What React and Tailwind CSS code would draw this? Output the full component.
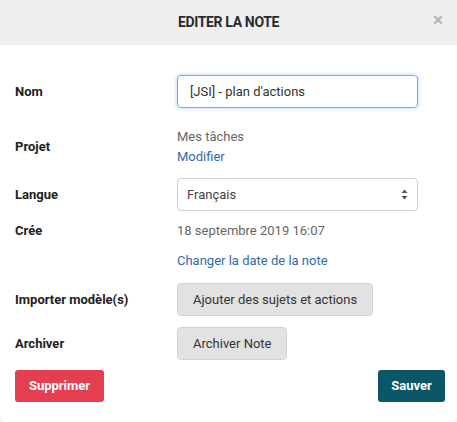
const FONT = { fontFamily: 'Roboto, "Liberation Sans", sans-serif' }

function Row({ label, children, className = '' }) {
  return (
    <div className={`flex items-center ${className}`}>
      <div className="w-[162px] text-[13px] font-bold text-[#222]">{label}</div>
      <div className="flex-1">{children}</div>
    </div>
  )
}

export default function App() {
  return (
    <div className="w-[457px] h-[422px] bg-[#f3f3f3]" style={FONT}>
      <div className="w-[457px] h-[422px] bg-white rounded-b-md overflow-hidden">
        {/* En-tête */}
        <div className="h-[45px] bg-[#efefef] flex items-center justify-center relative">
          <h1 className="text-[14px] font-bold text-[#2a2a2a] tracking-tight">EDITER LA NOTE</h1>
          <span className="absolute right-[14px] top-[10px] text-[#b5b5b5] text-[19px] font-bold leading-none">×</span>
        </div>

        {/* Formulaire */}
        <div className="pl-[15px] pr-[12px] pt-[30px]">
          <Row label="Nom">
            <input
              defaultValue="[JSI] - plan d'actions"
              className="w-[241px] h-[33px] px-[12px] rounded-[4px] border border-[#72aee6] shadow-[0_0_4px_rgba(80,150,230,0.45)] text-[13px] text-[#333] outline-none"
              style={FONT}
            />
          </Row>

          <Row label="Projet" className="mt-[19px]">
            <div className="text-[13px] text-[#666] leading-[20px]">Mes tâches</div>
            <div className="text-[13px] text-[#2f6aab] leading-[20px]">Modifier</div>
          </Row>

          <Row label="Langue" className="mt-[11px]">
            <div className="w-[241px] h-[33px] px-[9px] rounded-[4px] border border-[#cfcfcf] flex items-center justify-between text-[13px] text-[#444]">
              <span>Français</span>
              <svg width="7" height="11" viewBox="0 0 7 11">
                <path d="M3.5 0.5 L6.5 4 L0.5 4 Z" fill="#555" />
                <path d="M3.5 10.5 L6.5 7 L0.5 7 Z" fill="#555" />
              </svg>
            </div>
          </Row>

          <Row label="Crée" className="mt-[10px]">
            <div className="text-[13px] text-[#666]">18 septembre 2019 16:07</div>
          </Row>

          <Row label="" className="mt-[10px]">
            <div className="text-[13px] text-[#2f6aab]">Changer la date de la note</div>
          </Row>

          <Row label="Importer modèle(s)" className="mt-[13px]">
            <button className="h-[33px] px-[15px] rounded-[4px] bg-[#e2e2e2] border border-[#d3d3d3] text-[13px] text-[#333]">
              Ajouter des sujets et actions
            </button>
          </Row>

          <Row label="Archiver" className="mt-[11px]">
            <button className="h-[33px] px-[15px] rounded-[4px] bg-[#e2e2e2] border border-[#d3d3d3] text-[13px] text-[#333]">
              Archiver Note
            </button>
          </Row>

          <div className="flex justify-between mt-[10px]">
            <button className="w-[89px] h-[32px] rounded-[3px] bg-[#e33f4f] text-white text-[13px] font-bold">
              Supprimer
            </button>
            <button className="w-[67px] h-[32px] rounded-[3px] bg-[#0b5667] text-white text-[13px] font-bold">
              Sauver
            </button>
          </div>
        </div>
      </div>
    </div>
  )
}
